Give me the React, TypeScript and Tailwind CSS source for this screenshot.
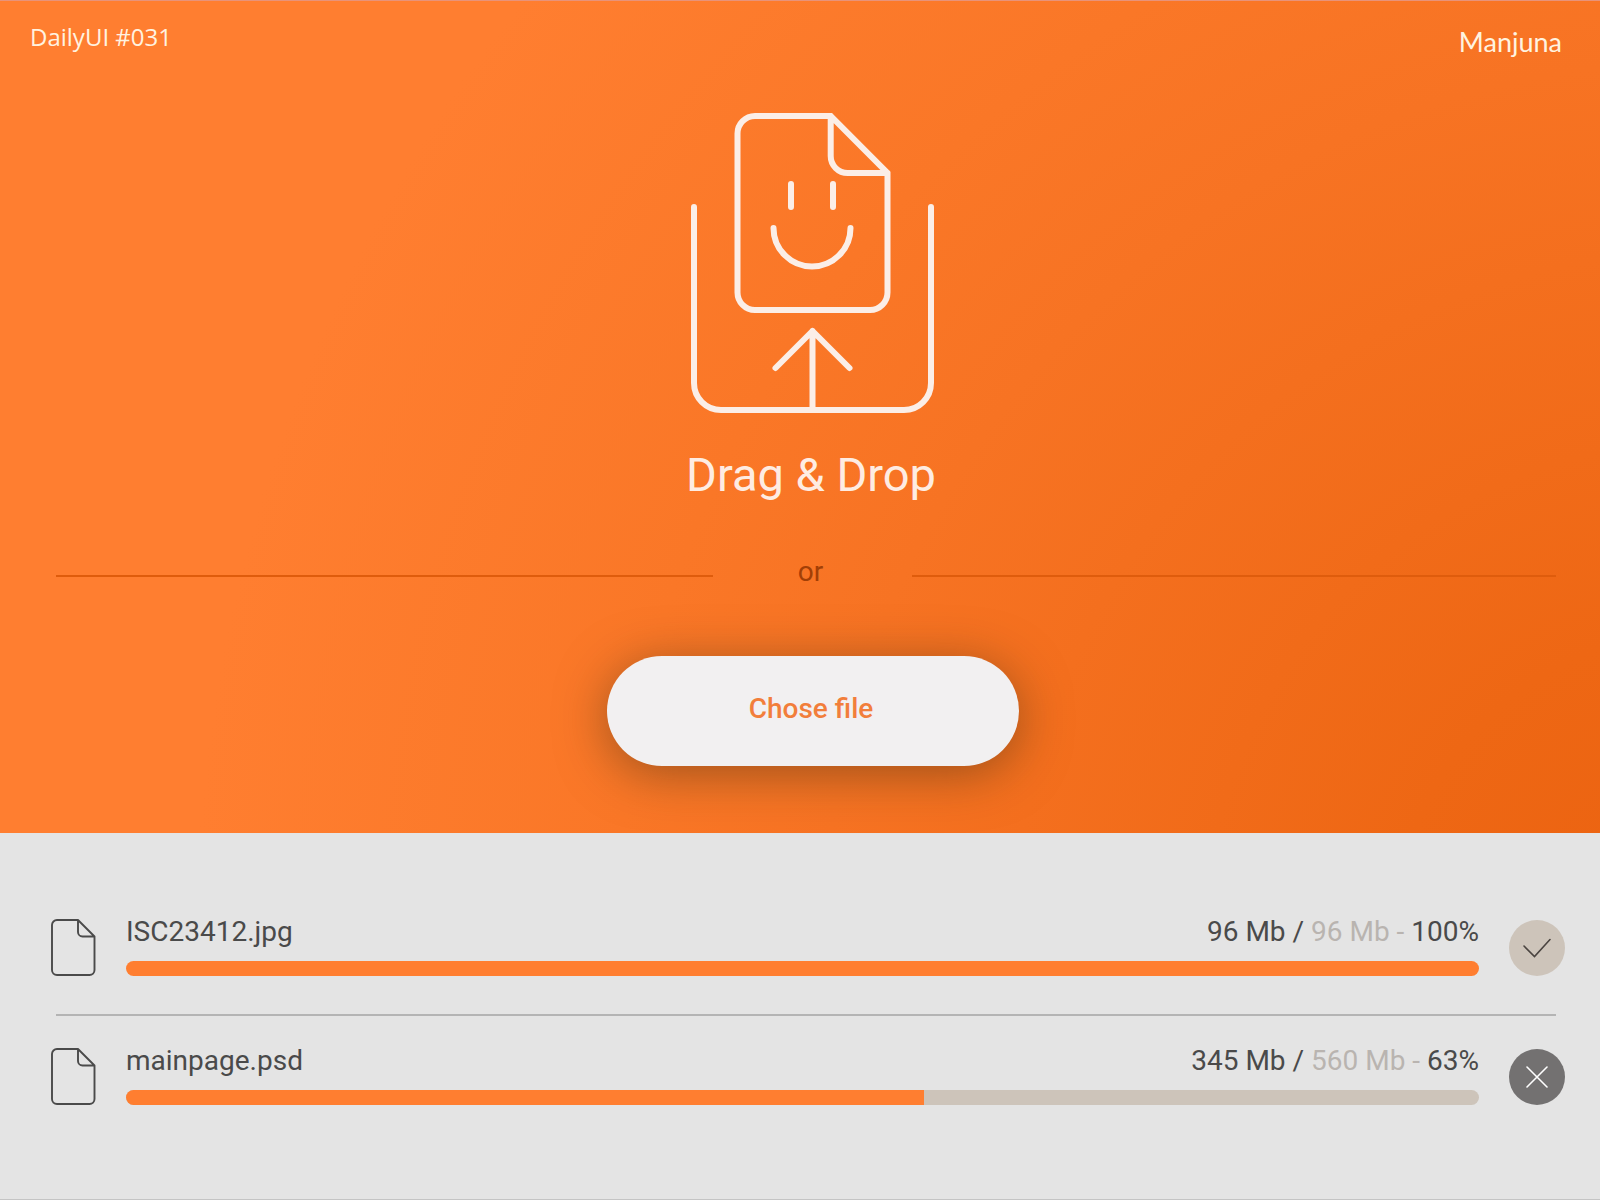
import React from 'react';

type Upload = {
  name: string;
  loaded: string;
  total: string;
  percent: string;
  barWidth: number;
  done: boolean;
};

const uploads: Upload[] = [
  { name: "ISC23412.jpg", loaded: "96 Mb", total: "96 Mb", percent: "100%", barWidth: 100, done: true },
  { name: "mainpage.psd", loaded: "345 Mb", total: "560 Mb", percent: "63%", barWidth: 59, done: false }
];

const DropIcon: React.FC = () => (
  <svg width="244" height="300" viewBox="0 0 244 300" fill="none" stroke="#fbeee7" strokeWidth="6" strokeLinecap="round" aria-hidden="true">
    <path d="M3 94V270a27 27 0 0 0 27 27H213a27 27 0 0 0 27-27V94" />
    <path d="M139.7 3H64a17.5 17.5 0 0 0-17.5 17.5V179.5a17.5 17.5 0 0 0 17.5 17.5H179a17.5 17.5 0 0 0 17.5-17.5V60L139.7 3V43a17 17 0 0 0 17 17H196.5" />
    <path d="M100 71V94M142 71V94" />
    <path d="M82.5 115a38.5 38.5 0 0 0 77 0" />
    <path d="M121.5 297V218M84.5 255l37-37 37 37" strokeLinejoin="round" />
  </svg>
);

const FileIcon: React.FC = () => (
  <svg width="45" height="57" viewBox="0 0 45 57" fill="none" stroke="#4a4a4a" strokeWidth="1.9" strokeLinejoin="round" className="shrink-0" aria-hidden="true">
    <path d="M27 1H6a5 5 0 0 0-5 5V51a5 5 0 0 0 5 5H38.5a5 5 0 0 0 5-5V17.5L27 1V13a4.5 4.5 0 0 0 4.5 4.5H43.5" />
  </svg>
);

const UploadRow: React.FC<{ item: Upload }> = ({ item }) => (
  <li className="flex items-end pl-[51px] pr-[35px]">
    <FileIcon />
    <div className="flex-1 mx-[30px]">
      <div className="flex justify-between text-[28px] leading-8 text-[#4a4a4a]">
        <span>{item.name}</span>
        <span>
          {item.loaded} / <span className="text-[#b9b4b0]">{item.total} - </span>{item.percent}
        </span>
      </div>
      <div
        role="progressbar"
        aria-label={item.name}
        aria-valuenow={parseInt(item.percent)}
        className="mt-[13px] h-[15px] rounded-full bg-[#cdc4ba] overflow-hidden"
      >
        <div className="h-full bg-[#ff7e30]" style={{ width: `${item.barWidth}%` }}></div>
      </div>
    </div>
    {item.done ? (
      <span className="w-14 h-14 rounded-full bg-[#cdc4ba] flex items-center justify-center shrink-0">
        <svg width="28" height="20" viewBox="0 0 28 20" fill="none" stroke="#4a4440" strokeWidth="1.6" strokeLinecap="round" aria-hidden="true">
          <path d="M1 8L11.5 18.5L27 1.5" />
        </svg>
      </span>
    ) : (
      <button type="button" aria-label="Cancel upload" className="w-14 h-14 rounded-full bg-[#737171] flex items-center justify-center shrink-0">
        <svg width="22" height="22" viewBox="0 0 22 22" fill="none" stroke="#ffffff" strokeWidth="1.6" strokeLinecap="round" aria-hidden="true">
          <path d="M1 1L21 21M21 1L1 21" />
        </svg>
      </button>
    )}
  </li>
);

const App: React.FC = () => {
  return (
    <div className="min-h-screen flex flex-col bg-[#e4e4e4] border-b border-[#c4c4c4] font-[Roboto,sans-serif]">
      <section className="border-t border-[#e8937a] pb-[67px] bg-[radial-gradient(circle_1500px_at_106%_112%,#eb6210_0%,#ee6714_20%,#f77323_58%,#fa7727_72%,#ff7e30_100%)]">
        <header className="flex justify-between items-start pl-[30px] pr-[38px] pt-5 text-[#fff3e0]">
          <span className="text-2xl leading-8 font-['Open_Sans',sans-serif]">DailyUI #031</span>
          <span className="text-[27px] leading-[42px] font-[Lato,sans-serif]">Manjuna</span>
        </header>

        <div className="flex flex-col items-center pl-[26px] pt-[50px]">
          <DropIcon />
          <h1 className="mt-8 pr-1 text-[47px] leading-[60px] text-[#feece2]">Drag &amp; Drop</h1>
        </div>

        <div className="grid grid-cols-[657fr_199px_644fr] items-center ml-14 mr-11 mt-[51px]">
          <div className="h-0.5 mt-2 bg-[#df5c0c]"></div>
          <span className="pr-1 text-center text-[28px] leading-8 text-[#a23f06]">or</span>
          <div className="h-0.5 mt-2 bg-[#df5c0c]"></div>
        </div>

        <div className="flex justify-center pl-[26px] mt-[68px]">
          <button
            type="button"
            className="w-[412px] h-[110px] pb-1 pr-1 rounded-full bg-[#f2f0f1] text-[#f27e3b] text-[28px] font-medium shadow-[0_8px_50px_rgba(70,50,20,0.5)]"
          >
            Chose file
          </button>
        </div>
      </section>

      <ul className="pt-[83px]">
        <UploadRow item={uploads[0]} />
        <li role="separator" className="h-0.5 mt-[38px] mb-[29px] ml-14 mr-11 bg-[#b4b4b4]"></li>
        <UploadRow item={uploads[1]} />
      </ul>
    </div>
  );
};

export default App;
